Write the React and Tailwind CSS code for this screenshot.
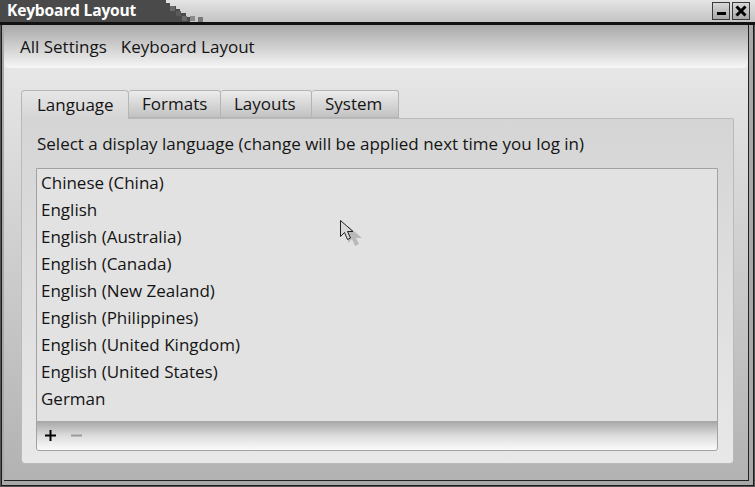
import React from 'react';

const languages = [
    'Chinese (China)',
    'English',
    'English (Australia)',
    'English (Canada)',
    'English (New Zealand)',
    'English (Philippines)',
    'English (United Kingdom)',
    'English (United States)',
    'German',
];

const tabs = [
    { name: 'Language', w: 'w-[108px]' },
    { name: 'Formats', w: 'w-[92px]' },
    { name: 'Layouts', w: 'w-[91px]' },
    { name: 'System', w: 'w-[87px]' },
];

const TitleBar = () => (
    <div className="relative h-[22px] flex items-center bg-gradient-to-b from-[#e4e4e4] to-[#c4c4c4]">
        {/* dark left part with the pixel staircase */}
        <svg className="absolute left-0 top-0" width="215" height="22" viewBox="0 0 215 22">
            <path d="M0 0 H166 V3 H170 V6 H176 V9 H180 V13 H186 V17 H190 V22 H0 Z" fill="#4a4a4a" />
            <rect x="170" y="6" width="5" height="5" fill="#6a6a6a" />
            <rect x="176" y="11" width="5" height="5" fill="#5a5a5a" />
            <rect x="182" y="16" width="5" height="5" fill="#6a6a6a" />
            <rect x="190" y="16" width="5" height="5" fill="#8a8a8a" />
            <rect x="198" y="17" width="5" height="5" fill="#7a7a7a" />
        </svg>
        <span className="relative pl-[7px] text-white font-bold text-[15.6px] leading-none font-['Open_Sans'] tracking-[-0.2px]">
            Keyboard Layout
        </span>
        <div className="ml-auto mr-[5px] flex gap-[2px] relative">
            <div className="w-[18px] h-[18px] border border-[#3a3a3a] bg-gradient-to-b from-[#d8d8d8] to-[#a8a8a8] flex items-end justify-center pb-[4px]">
                <div className="w-[9px] h-[3px] bg-black" />
            </div>
            <div className="w-[18px] h-[18px] border border-[#3a3a3a] bg-gradient-to-b from-[#d8d8d8] to-[#a8a8a8] flex items-center justify-center">
                <svg width="12" height="12" viewBox="0 0 12 12">
                    <path d="M1.5 1.5 L10.5 10.5 M10.5 1.5 L1.5 10.5" stroke="#000" strokeWidth="3" />
                </svg>
            </div>
        </div>
    </div>
);

const Cursor = () => (
    <svg className="absolute left-[338px] top-[218px]" width="28" height="32" viewBox="0 0 28 32">
        <path d="M7 5 L7 22 L11 18 L14 25 L18 23 L15 17 L21 17 Z" fill="#a8a8a8" opacity="0.7" transform="translate(3 3)" />
        <path d="M2.5 2.5 L2.5 18.5 L6.5 14.5 L9.5 21.5 L12.5 20 L9.5 13.5 L15 13.5 Z" fill="#d9d9d9" stroke="#222" strokeWidth="1" strokeLinejoin="miter" />
    </svg>
);

export default function App() {
    return (
        <div className="relative w-[755px] h-[487px] flex flex-col bg-[#2a2a2a] overflow-hidden font-['Open_Sans',sans-serif] text-[#141414]">
            <TitleBar />
            <div className="h-[3px] bg-[#111]" />
            {/* window frame */}
            <div className="flex-1 flex bg-[#555] pl-[1px] pr-[1px] pb-[1px]">
                <div className="flex-1 flex bg-[#1c1c1c] pl-[1px] pr-[1px] pb-[1px]">
                    <div className="flex-1 flex bg-[#a8a8a8] pl-[2px] pr-[4px] pb-[4px]">
                        <div className="flex-1 flex bg-[#222] pr-[1px] pb-[1px]">
                            <div className="flex-1 flex flex-col bg-gradient-to-b from-[#ececec] to-[#b2b2b2]">
                                {/* breadcrumb toolbar */}
                                <div className="h-[43px] rounded-b-[5px] bg-gradient-to-b from-[#a9a9a9] to-[#f6f6f6] flex items-center pl-[16px] gap-[14px] text-[17px]">
                                    <span>All Settings</span>
                                    <span>Keyboard Layout</span>
                                </div>

                                <div className="flex-1 flex flex-col pl-[17px] pr-[14px] pt-[22px] pb-[16px]">
                                    {/* tabs */}
                                    <div className="flex h-[28px] text-[17px] relative z-10">
                                        {tabs.map((t, i) => (
                                            <div
                                                key={t.name}
                                                className={
                                                    i === 0
                                                        ? `${t.w} h-[29px] pl-[15px] flex items-center rounded-t-[4px] border border-b-0 border-[#b6b6b6] bg-gradient-to-b from-[#e6e6e6] to-[#d5d5d5]`
                                                        : `${t.w} h-[28px] pl-[13px] flex items-center rounded-t-[3px] border border-l-0 border-[#b4b4b4] bg-gradient-to-b from-[#ececec] to-[#c2c2c2]`
                                                }
                                            >
                                                {t.name}
                                            </div>
                                        ))}
                                    </div>

                                    {/* tab panel */}
                                    <div className="flex-1 flex flex-col rounded-b-[4px] rounded-tr-[2px] border border-[#bababa] bg-gradient-to-b from-[#d5d5d5] to-[#e8e8e8] pl-[14px] pr-[15px] pb-[12px]">
                                        <div className="h-[49px] flex items-center pl-[1px] text-[17px] pt-[1px]">
                                            Select a display language (change will be applied next time you log in)
                                        </div>
                                        <div className="flex-1 flex flex-col border border-[#a2a2a2] rounded-b-[3px] bg-[#e2e2e2]">
                                            <div className="flex-1">
                                                {languages.map((l) => (
                                                    <div key={l} className="h-[27px] flex items-center pl-[4px] text-[17px]">
                                                        {l}
                                                    </div>
                                                ))}
                                            </div>
                                            <div className="h-[29px] flex items-center gap-[13px] pl-[7px] bg-gradient-to-b from-[#a6a6a6] via-[#dcdcdc] to-[#fbfbfb] rounded-b-[3px]">
                                                <svg width="13" height="13" viewBox="0 0 13 13">
                                                    <path d="M6.5 1 V12 M1 6.5 H12" stroke="#000" strokeWidth="2" />
                                                </svg>
                                                <svg width="13" height="13" viewBox="0 0 13 13">
                                                    <path d="M1 6.5 H12" stroke="#9a9a9a" strokeWidth="2" />
                                                </svg>
                                            </div>
                                        </div>
                                    </div>
                                </div>
                            </div>
                        </div>
                    </div>
                </div>
            </div>
            <Cursor />
        </div>
    );
}
